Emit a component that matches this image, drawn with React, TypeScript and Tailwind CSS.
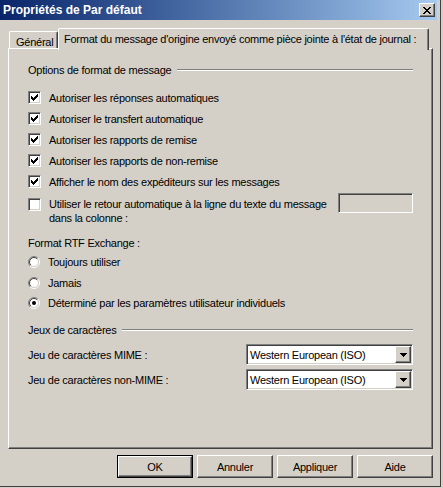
import React from "react";

const raised =
  "border border-t-white border-l-white border-r-[#404040] border-b-[#404040] shadow-[inset_-1px_-1px_0_#808080,inset_1px_1px_0_#d4d0c8]";
const sunken =
  "border border-t-[#808080] border-l-[#808080] border-r-white border-b-white shadow-[inset_1px_1px_0_#404040,inset_-1px_-1px_0_#d4d0c8]";

function PixelGlyph({ rows, color = "#000" }: { rows: string[]; color?: string }) {
  const w = rows[0].length;
  const h = rows.length;
  return (
    <svg width={w} height={h} viewBox={`0 0 ${w} ${h}`} shapeRendering="crispEdges">
      {rows.flatMap((r, y) =>
        r.split("").map((c, x) => (c === "#" ? <rect key={`${x}-${y}`} x={x} y={y} width={1} height={1} fill={color} /> : null))
      )}
    </svg>
  );
}

const CHECK = [
  "......#",
  ".....##",
  "#...###",
  "##.###.",
  "#####..",
  ".###...",
  "..#....",
];
const CLOSE = [
  "##....##",
  ".##..##.",
  "..####..",
  "...##...",
  "..####..",
  ".##..##.",
  "##....##",
];
const ARROW = ["#######", ".#####.", "..###..", "...#..."];

function CheckBox({ checked }: { checked: boolean }) {
  return (
    <div className={`w-[13px] h-[13px] shrink-0 bg-white flex items-center justify-center ${sunken}`}>
      {checked && <PixelGlyph rows={CHECK} />}
    </div>
  );
}

function Radio({ checked }: { checked: boolean }) {
  const a = 5.5 / Math.SQRT2;
  const b = 4.5 / Math.SQRT2;
  return (
    <svg width="12" height="12" viewBox="0 0 12 12" className="shrink-0">
      <circle cx="6" cy="6" r="4.5" fill="#fff" />
      <path d={`M${6 - a} ${6 + a} A5.5 5.5 0 0 1 ${6 + a} ${6 - a}`} stroke="#808080" fill="none" />
      <path d={`M${6 + a} ${6 - a} A5.5 5.5 0 0 1 ${6 - a} ${6 + a}`} stroke="#ffffff" fill="none" />
      <path d={`M${6 - b} ${6 + b} A4.5 4.5 0 0 1 ${6 + b} ${6 - b}`} stroke="#404040" fill="none" />
      <path d={`M${6 + b} ${6 - b} A4.5 4.5 0 0 1 ${6 - b} ${6 + b}`} stroke="#d4d0c8" fill="none" />
      {checked && <circle cx="6" cy="6" r="2" fill="#000" />}
    </svg>
  );
}

function GroupHeading({ label }: { label: string }) {
  return (
    <div className="flex items-center h-[14px]">
      <span className="whitespace-nowrap">{label}</span>
      <div className="flex-1 ml-[6px] h-[2px] border-t border-t-[#808080] border-b border-b-white" />
    </div>
  );
}

function CheckRow({ label, checked }: { label: string; checked: boolean }) {
  return (
    <div className="flex items-center h-[21px]">
      <CheckBox checked={checked} />
      <span className="ml-[8px] whitespace-nowrap">{label}</span>
    </div>
  );
}

function RadioRow({ label, checked, h }: { label: string; checked: boolean; h: string }) {
  return (
    <div className={`flex items-center ${h}`}>
      <Radio checked={checked} />
      <span className="ml-[8px] whitespace-nowrap">{label}</span>
    </div>
  );
}

function Combo({ value }: { value: string }) {
  return (
    <div className={`w-[167px] h-[21px] bg-white flex items-center pl-[3px] pr-[1px] ${sunken}`}>
      <span className="whitespace-nowrap">{value}</span>
      <div className={`ml-auto w-[16px] h-[17px] bg-[#d4d0c8] flex items-center justify-center ${raised}`}>
        <PixelGlyph rows={ARROW} />
      </div>
    </div>
  );
}

function Button({ label, def }: { label: string; def?: boolean }) {
  if (def) {
    return (
      <div className="w-[76px] h-[23px] border border-black">
        <div className={`w-full h-full flex items-center justify-center ${raised}`}>{label}</div>
      </div>
    );
  }
  return <div className={`w-[76px] h-[23px] flex items-center justify-center ${raised}`}>{label}</div>;
}

export default function App() {
  return (
    <div className="w-[443px] h-[488px] bg-[#d4d0c8] text-black text-[11px] leading-[14px] tracking-[-0.25px] font-['Liberation_Sans',Arial,sans-serif] overflow-hidden">
      <div className="w-[441px] h-[487px] border-r border-b border-[#404040] pr-[3px] flex flex-col">
        {/* Title bar */}
        <div className="h-[20px] flex items-center bg-gradient-to-r from-[#0a246a] to-[#a6caf0]">
          <span className="pl-[3px] text-white font-bold text-[12px] tracking-normal whitespace-nowrap">
            Propriétés de Par défaut
          </span>
          <div className={`ml-auto mr-[2px] w-[16px] h-[14px] bg-[#d4d0c8] flex items-center justify-center ${raised}`}>
            <PixelGlyph rows={CLOSE} />
          </div>
        </div>

        {/* Tabs + panel */}
        <div className="mt-[8px] ml-[8px] mr-[4px] flex flex-col">
          <div className="h-[20px] flex items-end pl-[1px]">
            <div className="w-[49px] h-[17px] border-l border-t border-white border-r border-r-[#404040] shadow-[inset_-1px_0_0_#808080] rounded-tl-[2px] rounded-tr-[2px] pt-[3px] pl-[6px] whitespace-nowrap">
              Général
            </div>
            <div className="relative z-10 -mb-[2px] w-[371px] h-[22px] bg-[#d4d0c8] border-l border-t border-white border-r border-r-[#404040] shadow-[inset_-1px_0_0_#808080] rounded-tl-[2px] rounded-tr-[2px] pt-[3px] pl-[5px] whitespace-nowrap">
              Format du message d'origine envoyé comme pièce jointe à l'état de journal :
            </div>
          </div>
          <div className="h-[401px] border border-t-white border-l-white border-r-[#404040] border-b-[#404040] shadow-[inset_-1px_-1px_0_#808080] px-[19px] pt-[14px] flex flex-col">
            <GroupHeading label="Options de format de message" />
            <div className="mt-[10px] flex flex-col">
              <CheckRow label="Autoriser les réponses automatiques" checked />
              <CheckRow label="Autoriser le transfert automatique" checked />
              <CheckRow label="Autoriser les rapports de remise" checked />
              <CheckRow label="Autoriser les rapports de non-remise" checked />
              <CheckRow label="Afficher le nom des expéditeurs sur les messages" checked />
            </div>
            <div className="h-[33px] flex items-start">
              <div className="mt-[6px]">
                <CheckBox checked={false} />
              </div>
              <div className="ml-[8px] mt-[5px] whitespace-nowrap">
                Utiliser le retour automatique à la ligne du texte du message
                <br />
                dans la colonne :
              </div>
              <div className={`ml-auto mt-[1px] w-[75px] h-[20px] bg-[#d4d0c8] ${sunken}`} />
            </div>
            <div className="mt-[11px] h-[14px] flex items-center">Format RTF Exchange :</div>
            <div className="mt-[2px] flex flex-col">
              <RadioRow label="Toujours utiliser" checked={false} h="h-[20px]" />
              <RadioRow label="Jamais" checked={false} h="h-[21px]" />
              <RadioRow label="Déterminé par les paramètres utilisateur individuels" checked h="h-[20px]" />
            </div>
            <div className="mt-[10px]">
              <GroupHeading label="Jeux de caractères" />
            </div>
            <div className="mt-[7px] h-[21px] flex items-center justify-between">
              <span className="whitespace-nowrap">Jeu de caractères MIME :</span>
              <Combo value="Western European (ISO)" />
            </div>
            <div className="mt-[4px] h-[21px] flex items-center justify-between">
              <span className="whitespace-nowrap">Jeu de caractères non-MIME :</span>
              <Combo value="Western European (ISO)" />
            </div>
          </div>
        </div>

        {/* Buttons */}
        <div className="mt-[6px] pr-[4px] flex justify-end gap-[4px]">
          <Button label="OK" def />
          <Button label="Annuler" />
          <Button label="Appliquer" />
          <Button label="Aide" />
        </div>
      </div>
    </div>
  );
}
